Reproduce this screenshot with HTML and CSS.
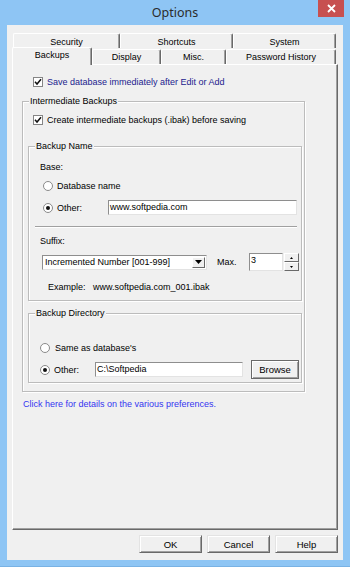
FILE: index.html
```html
<!DOCTYPE html>
<html lang="en">
<head>
    <meta charset="UTF-8">
    <meta name="viewport" content="width=device-width, initial-scale=1.0">
    <title>Options</title>
    <link rel="stylesheet" href="styles.css">
</head>
<body>
    <div class="window">
        <div class="titlebar">
            <div class="title">Options</div>
            <div class="close" aria-label="Close">
                <svg width="9" height="9" viewBox="0 0 9 9"><path d="M1 1 L8 8 M8 1 L1 8" stroke="#fff" stroke-width="1.8"/></svg>
            </div>
        </div>

        <div class="client">
            <!-- Tab strip, two rows -->
            <div class="tab-row top-row">
                <div class="tab tab-security">Security</div>
                <div class="tab tab-shortcuts">Shortcuts</div>
                <div class="tab tab-system">System</div>
            </div>
            <div class="tab-row bottom-row">
                <div class="tab tab-backups selected">Backups</div>
                <div class="tab tab-display">Display</div>
                <div class="tab tab-misc">Misc.</div>
                <div class="tab tab-history">Password History</div>
            </div>

            <div class="panel">
                <div class="check-row save-row">
                    <span class="box"><svg width="8" height="8" viewBox="0 0 8 8"><path d="M1 3.8 L3 6 L7 1.2" fill="none" stroke="#111" stroke-width="1.5"/></svg></span>
                    <span>Save database immediately after Edit or Add</span>
                </div>

                <fieldset class="group outer">
                    <legend>Intermediate Backups</legend>
                    <div class="check-row inter-row">
                        <span class="box"><svg width="8" height="8" viewBox="0 0 8 8"><path d="M1 3.8 L3 6 L7 1.2" fill="none" stroke="#111" stroke-width="1.5"/></svg></span>
                        <span>Create intermediate backups (.ibak) before saving</span>
                    </div>

                    <fieldset class="group inner name-group">
                        <legend>Backup Name</legend>
                        <div class="line base-label">Base:</div>
                        <div class="radio-row name-db">
                            <span class="radio"></span>
                            <span>Database name</span>
                        </div>
                        <div class="radio-row name-other">
                            <span class="radio checked"></span>
                            <span class="field-label other-label">Other:</span>
                            <div class="textbox name-box">www.softpedia.com</div>
                        </div>
                        <div class="sep"></div>
                        <div class="line suffix-label">Suffix:</div>
                        <div class="suffix-row">
                            <div class="select">
                                <span>Incremented Number [001-999]</span>
                                <span class="drop"><svg width="7" height="4" viewBox="0 0 7 4"><path d="M0 0 H7 L3.5 4 Z" fill="#000"/></svg></span>
                            </div>
                            <span class="max-label">Max.</span>
                            <div class="textbox max-box">3</div>
                            <div class="spinner">
                                <span class="spin"><svg width="3" height="2" viewBox="0 0 3 2"><path d="M0 2 H3 L1.5 0 Z" fill="#000"/></svg></span>
                                <span class="spin"><svg width="3" height="2" viewBox="0 0 3 2"><path d="M0 0 H3 L1.5 2 Z" fill="#000"/></svg></span>
                            </div>
                        </div>
                        <div class="example-row">
                            <span class="example-label">Example:</span>
                            <span>www.softpedia.com_001.ibak</span>
                        </div>
                    </fieldset>

                    <fieldset class="group inner dir-group">
                        <legend>Backup Directory</legend>
                        <div class="radio-row dir-same">
                            <span class="radio"></span>
                            <span>Same as database's</span>
                        </div>
                        <div class="radio-row dir-other">
                            <span class="radio checked"></span>
                            <span class="field-label dir-label">Other:</span>
                            <div class="textbox dir-box">C:\Softpedia</div>
                            <button class="btn browse">Browse</button>
                        </div>
                    </fieldset>
                </fieldset>

                <a class="help-link" href="#">Click here for details on the various preferences.</a>
            </div>

            <div class="buttons">
                <button class="btn">OK</button>
                <button class="btn">Cancel</button>
                <button class="btn">Help</button>
            </div>
        </div>
    </div>
</body>
</html>
```

FILE: styles.css
```css
/* Colours */
:root {
    --frame: #8ec5f4;
    --face: #f0f0f0;
    --light: #ffffff;
    --shadow: #a0a0a0;
    --dark: #696969;
    --group-line: #bcbcbc;
}

* {
    box-sizing: border-box;
}

body {
    margin: 0;
    font-family: "Liberation Sans", Arial, sans-serif;
    font-size: 9px;
    color: #000;
}

/* Window frame */
.window {
    width: 350px;
    height: 567px;
    background-color: var(--frame);
    border-bottom: 1px solid #79b2e4;
    padding: 0 7px 6px;
    display: flex;
    flex-direction: column;
}

.titlebar {
    height: 25px;
    display: grid;
    grid-template-columns: 1fr auto 1fr;
}

.title {
    grid-column: 2;
    font-family: "Noto Sans", sans-serif;
    font-size: 12.5px;
    line-height: 25px;
    color: #2b2b2b;
}

.close {
    grid-column: 3;
    justify-self: end;
    width: 26px;
    height: 17px;
    margin-right: -1px;
    background-color: #c75050;
    display: flex;
    align-items: center;
    justify-content: center;
}

.client {
    flex: 1;
    background-color: var(--face);
    padding: 8px 5px 0;
    display: flex;
    flex-direction: column;
}

/* Tabs */
.tab-row {
    display: flex;
}

.top-row {
    height: 15px;
    margin-left: 1px;
}

.top-row .tab {
    line-height: 16px;
}

.bottom-row {
    height: 17px;
    margin-top: -1px;
    align-items: flex-end;
}

.tab {
    height: 15px;
    line-height: 14px;
    text-align: center;
    background-color: var(--face);
    border-top: 1px solid var(--light);
    border-left: 1px solid var(--light);
    border-right: 1px solid var(--dark);
    border-radius: 2px 2px 0 0;
    box-shadow: inset -1px 0 0 var(--shadow);
}

.tab.selected {
    height: 18px;
    line-height: 15px;
    margin-bottom: -1px;
    position: relative;
    z-index: 1;
}

.tab-security { width: 107px; }
.tab-shortcuts { width: 113px; }
.tab-system { width: 103px; }
.tab-backups { width: 80px; }
.tab-display { width: 69px; }
.tab-misc { width: 65px; }
.tab-history { width: 110px; }

.panel {
    height: 466px;
    border: 1px solid;
    border-color: var(--light) var(--dark) var(--dark) var(--light);
    box-shadow: inset -1px -1px 0 var(--shadow);
}

/* Check boxes and radios */
.check-row,
.radio-row {
    display: flex;
    align-items: center;
}

.check-row {
    height: 11px;
    gap: 4px;
}

.box {
    width: 10px;
    height: 10px;
    border: 1px solid #858585;
    background-color: #fff;
    display: flex;
    align-items: center;
    justify-content: center;
}

.radio {
    width: 10px;
    height: 10px;
    border-radius: 50%;
    border: 1px solid #8a8a8a;
    background-color: #fff;
    margin-right: 4px;
    display: flex;
    align-items: center;
    justify-content: center;
}

.radio.checked::after {
    content: "";
    width: 4px;
    height: 4px;
    border-radius: 50%;
    background-color: #111;
}

.save-row {
    margin: 11px 0 0 20px;
    color: #22228e;
}

.inter-row {
    margin: 7px 0 0 10px;
}

/* Group boxes */
.group {
    margin: 0;
    padding: 0;
    border: 1px solid var(--group-line);
    box-shadow: inset 1px 1px 0 var(--light), 1px 1px 0 var(--light);
}

.group legend {
    margin-left: 6px;
    padding: 0 1px;
    line-height: 12px;
    background-color: var(--face);
}

.outer {
    width: 283px;
    margin: 8px 0 0 9px;
    padding-bottom: 8px;
}

.inner {
    width: 274px;
    margin-left: 5px;
}

.name-group {
    margin-top: 15px;
    padding-bottom: 7px;
}

.dir-group {
    margin-top: 6px;
    padding-bottom: 3px;
}

.line {
    line-height: 12px;
}

.base-label {
    margin: 9px 0 0 11px;
}

.name-db {
    height: 12px;
    margin: 7px 0 0 14px;
}

.name-other {
    height: 15px;
    margin: 8px 0 0 14px;
}

.other-label { width: 51px; }
.dir-label { width: 41px; }

.textbox {
    height: 15px;
    line-height: 13px;
    padding-left: 1px;
    background-color: #fff;
    border: 1px solid;
    border-color: #8e8e8e #e3e3e3 #e3e3e3 #8e8e8e;
}

.name-box { width: 189px; }

.sep {
    width: 262px;
    margin: 11px 0 0 6px;
    border-top: 1px solid var(--shadow);
    border-bottom: 1px solid var(--light);
}

.suffix-label {
    margin: 7px 0 0 11px;
}

.suffix-row {
    height: 18px;
    margin: 6px 0 0 13px;
    display: flex;
    align-items: center;
}

.select {
    width: 165px;
    height: 15px;
    padding: 0 1px 0 2px;
    background-color: #fff;
    border: 1px solid;
    border-color: #8e8e8e #e3e3e3 #e3e3e3 #8e8e8e;
    display: flex;
    align-items: center;
    justify-content: space-between;
}

.drop,
.spin {
    background-color: var(--face);
    border: 1px solid;
    border-color: var(--light) var(--dark) var(--dark) var(--light);
    display: flex;
    align-items: center;
    justify-content: center;
}

.drop {
    width: 13px;
    height: 11px;
}

.max-label {
    width: 32px;
    margin-left: 10px;
}

.max-box {
    width: 34px;
    height: 18px;
    line-height: 12px;
}

.spinner {
    width: 15px;
    height: 18px;
    margin-left: 1px;
    display: flex;
    flex-direction: column;
}

.spin {
    height: 9px;
}

.example-row {
    margin: 10px 0 0 19px;
    line-height: 12px;
    display: flex;
}

.example-label {
    width: 45px;
}

.dir-same {
    height: 12px;
    margin: 23px 0 0 11px;
}

.dir-same .radio {
    margin-right: 5px;
}

.dir-other {
    height: 19px;
    margin: 6px 0 0 11px;
}

.dir-box { width: 148px; }

/* Buttons */
.btn {
    height: 18px;
    width: 63px;
    padding: 0;
    font-family: "Liberation Sans", Arial, sans-serif;
    font-size: 9.5px;
    color: #000;
    background-color: var(--face);
    border: 1px solid;
    border-color: #e3e3e3 var(--dark) var(--dark) #e3e3e3;
    box-shadow: inset 1px 1px 0 var(--light), inset -1px -1px 0 var(--shadow);
}

.browse {
    width: 48px;
    height: 19px;
    margin-left: 8px;
    border-color: var(--dark);
}

.help-link {
    display: block;
    margin: 6px 0 0 10px;
    line-height: 12px;
    color: #3535f0;
    text-decoration: none;
}

.buttons {
    display: flex;
    justify-content: flex-end;
    gap: 5px;
    margin-top: 5px;
}
```
